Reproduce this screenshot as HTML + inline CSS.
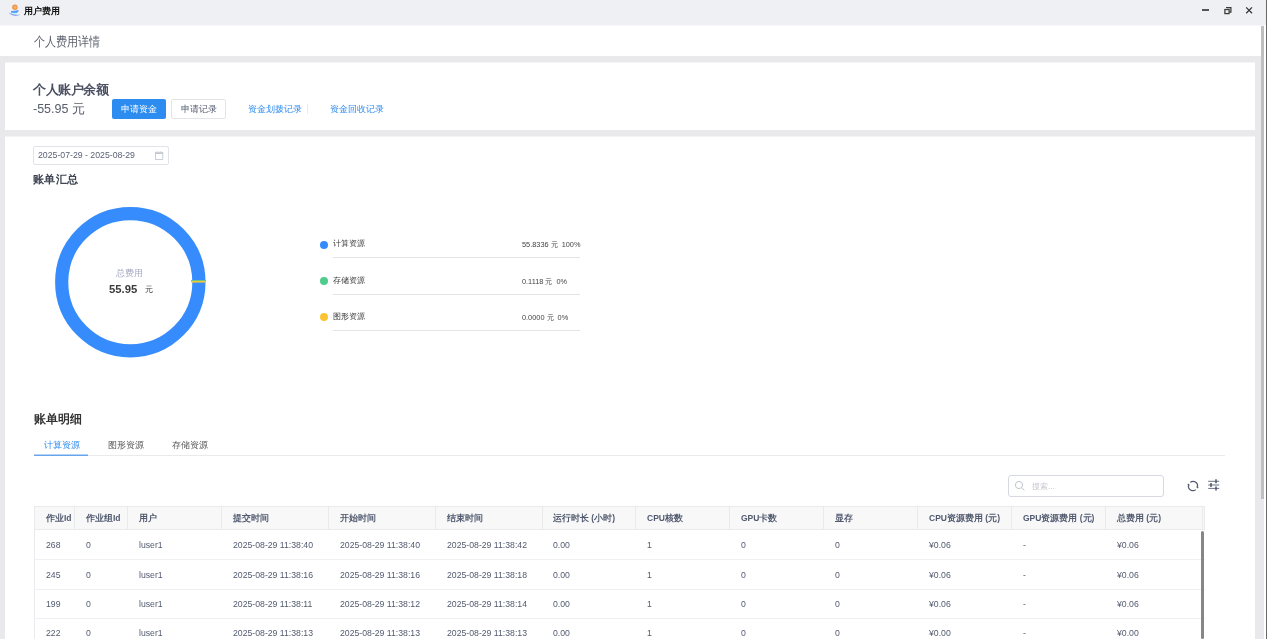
<!DOCTYPE html>
<html><head><meta charset="utf-8">
<style>
*{box-sizing:border-box;margin:0;padding:0}
html,body{width:1267px;height:639px;overflow:hidden;background:#fff;font-family:"Liberation Sans",sans-serif;color:#333}
.a{position:absolute;white-space:nowrap}
#titlebar{position:absolute;left:0;top:0;width:1267px;height:25px;background:#eff0f4}
#page{position:absolute;left:0;top:25px;width:1267px;height:614px;background:#e9e9eb}
.card{position:absolute;left:5px;width:1250px;background:#fff}
.btn{position:absolute;height:20px;border-radius:2px;font-size:8.7px;line-height:20px;text-align:center}
.lg-dot{position:absolute;width:8px;height:8px;border-radius:50%}
.lg-t{position:absolute;font-size:7.8px;color:#3a3a3a;line-height:10px}
.lg-v{position:absolute;font-size:7.35px;color:#444;line-height:10px}
.lg-line{position:absolute;left:333px;width:247px;height:1px;background:#e3e4e8}
.th{position:absolute;top:506px;height:24px;background:#f8f8f9;border-top:1px solid #e8eaec;border-bottom:1px solid #e8eaec}
.thl{position:absolute;top:507px;width:1px;height:22px;background:#e8eaec}
.tht{position:absolute;top:512px;font-size:8.5px;font-weight:bold;color:#515a6e;line-height:12px}
.td{position:absolute;font-size:8.7px;color:#515a6e;line-height:12px}
.rl{position:absolute;left:34px;width:1171px;height:1px;background:#eef0f3}
</style></head><body>
<div id="root" style="position:absolute;left:0;top:0;width:1267px;height:639px;overflow:hidden;will-change:transform">
<div id="titlebar">
  <svg class="a" style="left:0;top:0" width="25" height="25" viewBox="0 0 25 25">
    <defs><radialGradient id="og" cx="0.55" cy="0.5" r="0.6"><stop offset="0" stop-color="#f7c08a"/><stop offset="0.6" stop-color="#f29248"/><stop offset="1" stop-color="#ee9a40"/></radialGradient>
    <linearGradient id="bg1" x1="0" y1="0" x2="0" y2="1"><stop offset="0" stop-color="#4a90f4"/><stop offset="0.7" stop-color="#58a6f8"/><stop offset="1" stop-color="#7fe0fa"/></linearGradient></defs>
    <path d="M8.2 12.6Q11.5 16.2 15.5 16Q18.8 15.7 20.3 14.4Q16 15 12.5 14.1Q10 13.5 8.2 12.6Z" fill="#86a6ee"/>
    <path d="M11 10.9Q15 10.8 18.7 9.9Q18.6 12.4 16.5 13.3Q13.5 13.6 11.3 13Q10.8 12 11 10.9Z" fill="url(#bg1)"/>
    <circle cx="14.9" cy="7.3" r="2.75" fill="url(#og)"/>
  </svg>
  <div class="a" style="left:24px;top:5px;font-size:9.2px;font-weight:bold;color:#111;line-height:12px">用户费用</div>
  <div class="a" style="left:1202.3px;top:9.2px;width:6.6px;height:1.6px;background:#555"></div>
  <svg class="a" style="left:1223px;top:6px" width="10" height="9" viewBox="0 0 10 9"><path d="M3.6 1.9V1.7h4.3v4.3H6.4" fill="none" stroke="#3a3a3a" stroke-width="1.25"/><rect x="1.9" y="3.5" width="4.2" height="4.1" fill="none" stroke="#3a3a3a" stroke-width="1.25"/></svg>
  <svg class="a" style="left:1244px;top:5px" width="10" height="10" viewBox="0 0 10 10"><path d="M2.2 2.4l5.8 5.8M8 2.4l-5.8 5.8" stroke="#333" stroke-width="1.25"/></svg>
</div>
<div id="page">
  <div class="a" style="left:0;top:0;width:1261px;height:31px;background:#fff"></div>
  <div class="card" style="top:37px;height:68px"></div>
  <div class="card" style="top:111px;height:510px"></div>
</div>
<div class="a" style="left:5px;top:62px;width:1250px;height:1px;background:#f4f4f5"></div>
<div class="a" style="left:5px;top:136px;width:1250px;height:1px;background:#f4f4f5"></div>
<!-- header text -->
<div class="a" style="left:33.5px;top:33.5px;font-size:12.5px;transform-origin:0 0;transform:scaleX(0.85);color:#5a5f6b;line-height:16px">个人费用详情</div>

<!-- card 1 -->
<div class="a" style="left:33px;top:81.5px;font-size:12.6px;letter-spacing:-0.45px;font-weight:bold;color:#4a5062;line-height:16px">个人账户余额</div>
<div class="a" style="left:33px;top:102px;font-size:12.5px;color:#585e6c;line-height:14px">-55.95 元</div>
<div class="btn" style="left:112px;top:99px;width:54px;background:#2d8cf0;color:#fff">申请资金</div>
<div class="btn" style="left:171px;top:99px;width:55px;border:1px solid #e2e4e8;color:#515a6e;line-height:18px">申请记录</div>
<div class="a" style="left:248px;top:103px;font-size:8.7px;color:#2d8cf0;line-height:12px">资金划拨记录</div>
<div class="a" style="left:307px;top:104px;width:1px;height:10px;background:#e8eaec"></div>
<div class="a" style="left:330px;top:103px;font-size:8.7px;color:#2d8cf0;line-height:12px">资金回收记录</div>

<!-- date picker -->
<div class="a" style="left:33px;top:146px;width:136px;height:19px;border:1px solid #e1e3e8;border-radius:2px"></div>
<div class="a" style="left:38px;top:149px;font-size:8.72px;color:#5a6274;line-height:12px">2025-07-29 - 2025-08-29</div>
<svg class="a" style="left:154px;top:151px" width="10" height="9" viewBox="0 0 10 9"><rect x="1.5" y="1.3" width="7.3" height="7.1" fill="none" stroke="#c3c7cf" stroke-width="0.85"/><path d="M1.5 2.4h7.3" stroke="#c3c7cf" stroke-width="1.2"/><path d="M3.8 0.3v1.4M6.5 0.3v1.4" stroke="#c8ccd4" stroke-width="0.7"/></svg>

<div class="a" style="left:33px;top:172px;font-size:11.4px;letter-spacing:0.4px;font-weight:bold;color:#3f4552;line-height:14px">账单汇总</div>

<!-- donut -->
<svg class="a" style="left:0;top:0" width="300" height="400" viewBox="0 0 300 400">
  <circle cx="130.3" cy="282.2" r="68.6" fill="none" stroke="#368cfd" stroke-width="13.2"/>
  <rect x="191" y="280" width="15" height="1" fill="#6cc58a"/>
  <rect x="191" y="281" width="15" height="1.6" fill="#f0c93a"/>
</svg>
<div class="a" style="left:116px;top:266.5px;font-size:9.3px;color:#a4a9c2;line-height:12px">总费用</div>
<div class="a" style="left:109px;top:282px;font-size:11.3px;font-weight:bold;color:#3a3a3a;line-height:14px">55.95</div>
<div class="a" style="left:145px;top:284px;font-size:8px;color:#444;line-height:11px">元</div>

<!-- legend -->
<div class="lg-dot" style="left:320px;top:240.5px;background:#348cfc"></div>
<div class="lg-t" style="left:333px;top:239px">计算资源</div>
<div class="lg-v" style="left:522px;top:240px">55.8336 元&nbsp; 100%</div>
<div class="lg-line" style="top:257px"></div>
<div class="lg-dot" style="left:320px;top:277px;background:#4fcb8c"></div>
<div class="lg-t" style="left:333px;top:275.5px">存储资源</div>
<div class="lg-v" style="left:522px;top:276.5px">0.1118 元&nbsp; 0%</div>
<div class="lg-line" style="top:293.5px"></div>
<div class="lg-dot" style="left:320px;top:313px;background:#fcc433"></div>
<div class="lg-t" style="left:333px;top:312px">图形资源</div>
<div class="lg-v" style="left:522px;top:313px">0.0000 元&nbsp; 0%</div>
<div class="lg-line" style="top:330px"></div>

<!-- detail -->
<div class="a" style="left:34px;top:412px;font-size:11.5px;font-weight:bold;color:#333;line-height:15px">账单明细</div>
<div class="a" style="left:44px;top:439px;font-size:8.9px;color:#2d8cf0;line-height:12px">计算资源</div>
<div class="a" style="left:108px;top:439px;font-size:8.9px;color:#555;line-height:12px">图形资源</div>
<div class="a" style="left:172px;top:439px;font-size:8.9px;color:#555;line-height:12px">存储资源</div>
<div class="a" style="left:34px;top:455px;width:1191px;height:1px;background:#e8eaec"></div>
<div class="a" style="left:34px;top:454px;width:54px;height:1px;background:#b4d2f6"></div><div class="a" style="left:34px;top:455px;width:54px;height:1px;background:#68a3ee"></div>

<!-- search -->
<div class="a" style="left:1008px;top:475px;width:156px;height:22px;border:1px solid #d6d9df;border-radius:3px"></div>
<svg class="a" style="left:1014px;top:480px" width="12" height="12" viewBox="0 0 12 12"><circle cx="5" cy="5" r="3.6" fill="none" stroke="#c2c5cc" stroke-width="1"/><path d="M7.6 7.6l2.8 2.8" stroke="#c2c5cc" stroke-width="1"/></svg>
<div class="a" style="left:1032px;top:480px;font-size:8.4px;color:#c5c8ce;line-height:12px">搜索...</div>
<svg class="a" style="left:1186px;top:479px" width="14" height="14" viewBox="0 0 14 14"><path d="M4.17 3.38A4.6 4.6 0 0 1 11.50 7.96M9.83 10.62A4.6 4.6 0 0 1 2.50 6.04" fill="none" stroke="#515a6e" stroke-width="1.15"/><path d="M11.19 9.42L12.91 8.05L10.17 7.47zM2.81 4.58L1.09 5.95L3.83 6.53z" fill="#515a6e"/></svg>
<svg class="a" style="left:1207px;top:479px" width="14" height="12" viewBox="0 0 14 12"><path d="M1.2 2.3h11M1.2 6h11M1.2 9.4h11" stroke="#6a7285" stroke-width="1"/><path d="M9 0.3v4M4 4v4M9 7.4v4" stroke="#444b5c" stroke-width="1.4"/></svg>

<!-- table -->
<div class="th" style="left:34px;width:1171px"></div>
<div class="a" style="left:34px;top:506px;width:1px;height:133px;background:#e8eaec"></div>
<div class="thl" style="left:74px"></div>
<div class="thl" style="left:127px"></div>
<div class="thl" style="left:221px"></div>
<div class="thl" style="left:328px"></div>
<div class="thl" style="left:435px"></div>
<div class="thl" style="left:542px"></div>
<div class="thl" style="left:635px"></div>
<div class="thl" style="left:729px"></div>
<div class="thl" style="left:823px"></div>
<div class="thl" style="left:917px"></div>
<div class="thl" style="left:1011px"></div>
<div class="thl" style="left:1105px"></div>
<div class="thl" style="left:1202px"></div>
<div class="a" style="left:1204px;top:506px;width:1px;height:24px;background:#e8eaec"></div>
<div class="tht" style="left:46px">作业Id</div>
<div class="tht" style="left:86px">作业组Id</div>
<div class="tht" style="left:139px">用户</div>
<div class="tht" style="left:233px">提交时间</div>
<div class="tht" style="left:340px">开始时间</div>
<div class="tht" style="left:447px">结束时间</div>
<div class="tht" style="left:553px">运行时长 (小时)</div>
<div class="tht" style="left:647px">CPU核数</div>
<div class="tht" style="left:741px">GPU卡数</div>
<div class="tht" style="left:835px">显存</div>
<div class="tht" style="left:929px">CPU资源费用 (元)</div>
<div class="tht" style="left:1023px">GPU资源费用 (元)</div>
<div class="tht" style="left:1117px">总费用 (元)</div>
<!--ROWS--><div class="td" style="left:46px;top:539.0px">268</div>
<div class="td" style="left:86px;top:539.0px">0</div>
<div class="td" style="left:139px;top:539.0px">luser1</div>
<div class="td" style="left:233px;top:539.0px">2025-08-29 11:38:40</div>
<div class="td" style="left:340px;top:539.0px">2025-08-29 11:38:40</div>
<div class="td" style="left:447px;top:539.0px">2025-08-29 11:38:42</div>
<div class="td" style="left:553px;top:539.0px">0.00</div>
<div class="td" style="left:647px;top:539.0px">1</div>
<div class="td" style="left:741px;top:539.0px">0</div>
<div class="td" style="left:835px;top:539.0px">0</div>
<div class="td" style="left:929px;top:539.0px">¥0.06</div>
<div class="td" style="left:1023px;top:539.0px">-</div>
<div class="td" style="left:1117px;top:539.0px">¥0.06</div>
<div class="rl" style="top:559px"></div>
<div class="td" style="left:46px;top:568.5px">245</div>
<div class="td" style="left:86px;top:568.5px">0</div>
<div class="td" style="left:139px;top:568.5px">luser1</div>
<div class="td" style="left:233px;top:568.5px">2025-08-29 11:38:16</div>
<div class="td" style="left:340px;top:568.5px">2025-08-29 11:38:16</div>
<div class="td" style="left:447px;top:568.5px">2025-08-29 11:38:18</div>
<div class="td" style="left:553px;top:568.5px">0.00</div>
<div class="td" style="left:647px;top:568.5px">1</div>
<div class="td" style="left:741px;top:568.5px">0</div>
<div class="td" style="left:835px;top:568.5px">0</div>
<div class="td" style="left:929px;top:568.5px">¥0.06</div>
<div class="td" style="left:1023px;top:568.5px">-</div>
<div class="td" style="left:1117px;top:568.5px">¥0.06</div>
<div class="rl" style="top:589px"></div>
<div class="td" style="left:46px;top:597.9px">199</div>
<div class="td" style="left:86px;top:597.9px">0</div>
<div class="td" style="left:139px;top:597.9px">luser1</div>
<div class="td" style="left:233px;top:597.9px">2025-08-29 11:38:11</div>
<div class="td" style="left:340px;top:597.9px">2025-08-29 11:38:12</div>
<div class="td" style="left:447px;top:597.9px">2025-08-29 11:38:14</div>
<div class="td" style="left:553px;top:597.9px">0.00</div>
<div class="td" style="left:647px;top:597.9px">1</div>
<div class="td" style="left:741px;top:597.9px">0</div>
<div class="td" style="left:835px;top:597.9px">0</div>
<div class="td" style="left:929px;top:597.9px">¥0.06</div>
<div class="td" style="left:1023px;top:597.9px">-</div>
<div class="td" style="left:1117px;top:597.9px">¥0.06</div>
<div class="rl" style="top:618px"></div>
<div class="td" style="left:46px;top:627.4px">222</div>
<div class="td" style="left:86px;top:627.4px">0</div>
<div class="td" style="left:139px;top:627.4px">luser1</div>
<div class="td" style="left:233px;top:627.4px">2025-08-29 11:38:13</div>
<div class="td" style="left:340px;top:627.4px">2025-08-29 11:38:13</div>
<div class="td" style="left:447px;top:627.4px">2025-08-29 11:38:13</div>
<div class="td" style="left:553px;top:627.4px">0.00</div>
<div class="td" style="left:647px;top:627.4px">1</div>
<div class="td" style="left:741px;top:627.4px">0</div>
<div class="td" style="left:835px;top:627.4px">0</div>
<div class="td" style="left:929px;top:627.4px">¥0.00</div>
<div class="td" style="left:1023px;top:627.4px">-</div>
<div class="td" style="left:1117px;top:627.4px">¥0.00</div><!--/ROWS-->
<div class="a" style="left:1201px;top:531px;width:3px;height:108px;background:#868686;border-radius:1.5px"></div>

<!-- page scrollbar -->
<div class="a" style="left:1264px;top:25px;width:2px;height:614px;background:#fff"></div>
<div class="a" style="left:1261px;top:25px;width:3px;height:474px;background:#bfbfbf"></div>
<div class="a" style="left:0;top:25px;width:1264px;height:1px;background:#f7f8fa"></div>
<div class="a" style="left:1266px;top:0;width:1px;height:639px;background:#6a6a6a"></div>
</div>
</body></html>
